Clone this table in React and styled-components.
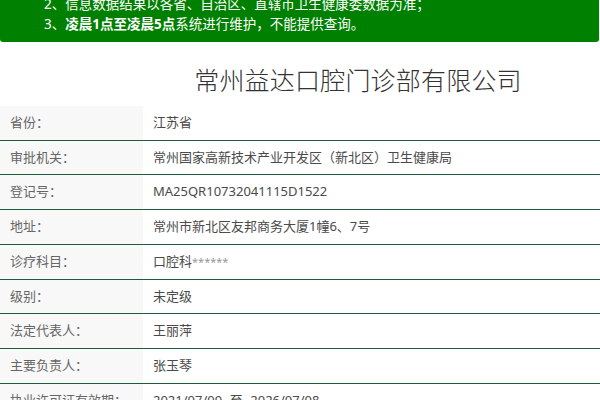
import React from 'react';
import styled, { createGlobalStyle } from 'styled-components';

const GlobalStyle = createGlobalStyle`
  html, body {
    margin: 0;
    padding: 0;
    background: #fff;
    overflow: hidden;
  }
  body {
    font-family: "Noto Sans", "Noto Sans CJK SC", sans-serif;
  }
`;

const Page = styled.div`
  width: 600px;
`;

const Notice = styled.div`
  background: #008000;
  color: #fff;
  margin: -36px 1px 0 0;
  padding: 10px 0 8px 44px;
  border-radius: 0 0 3px 3px;
  font-size: 13.5px;
  line-height: 20px;

  p {
    margin: 0;
  }

  b {
    font-weight: 700;
  }
`;

const Title = styled.h1`
  margin: 24px 0 12px;
  padding-left: 116px;
  text-align: center;
  font-size: 25px;
  line-height: 28px;
  font-weight: 300;
  color: #333;
  letter-spacing: 0.2px;
`;

const Table = styled.div`
  display: flex;
  flex-direction: column;
`;

const Row = styled.div`
  display: grid;
  grid-template-columns: 143px 1fr;
  border-bottom: 1px solid #1e5c3c;
  font-size: 13px;
  line-height: 19.7px;
`;

const Label = styled.div`
  background: #f8f8f8;
  color: #666;
  padding: 7px 10px;
`;

const Value = styled.div`
  color: #4a4a4a;
  padding: 7px 10px;
`;

const Mask = styled.span`
  color: #999;
  font-size: 11px;
`;

const rows = [
  ['省份：', '江苏省'],
  ['审批机关：', '常州国家高新技术产业开发区（新北区）卫生健康局'],
  ['登记号：', 'MA25QR10732041115D1522'],
  ['地址：', '常州市新北区友邦商务大厦1幢6、7号'],
  ['诊疗科目：', <>口腔科<Mask>******</Mask></>],
  ['级别：', '未定级'],
  ['法定代表人：', '王丽萍'],
  ['主要负责人：', '张玉琴'],
  ['执业许可证有效期：', '2021/07/09 -至- 2026/07/08'],
];

const App = () => {
  return (
    <Page>
      <GlobalStyle />
      <Notice>
        <p>1、数据来源于各级卫生健康行政部门；</p>
        <p>2、信息数据结果以各省、自治区、直辖市卫生健康委数据为准；</p>
        <p>
          3、<b>凌晨1点至凌晨5点</b>系统进行维护，不能提供查询。
        </p>
      </Notice>
      <Title>常州益达口腔门诊部有限公司</Title>
      <Table>
        {rows.map(([label, value], i) => (
          <Row key={i}>
            <Label>{label}</Label>
            <Value>{value}</Value>
          </Row>
        ))}
      </Table>
    </Page>
  );
};

export default App;
